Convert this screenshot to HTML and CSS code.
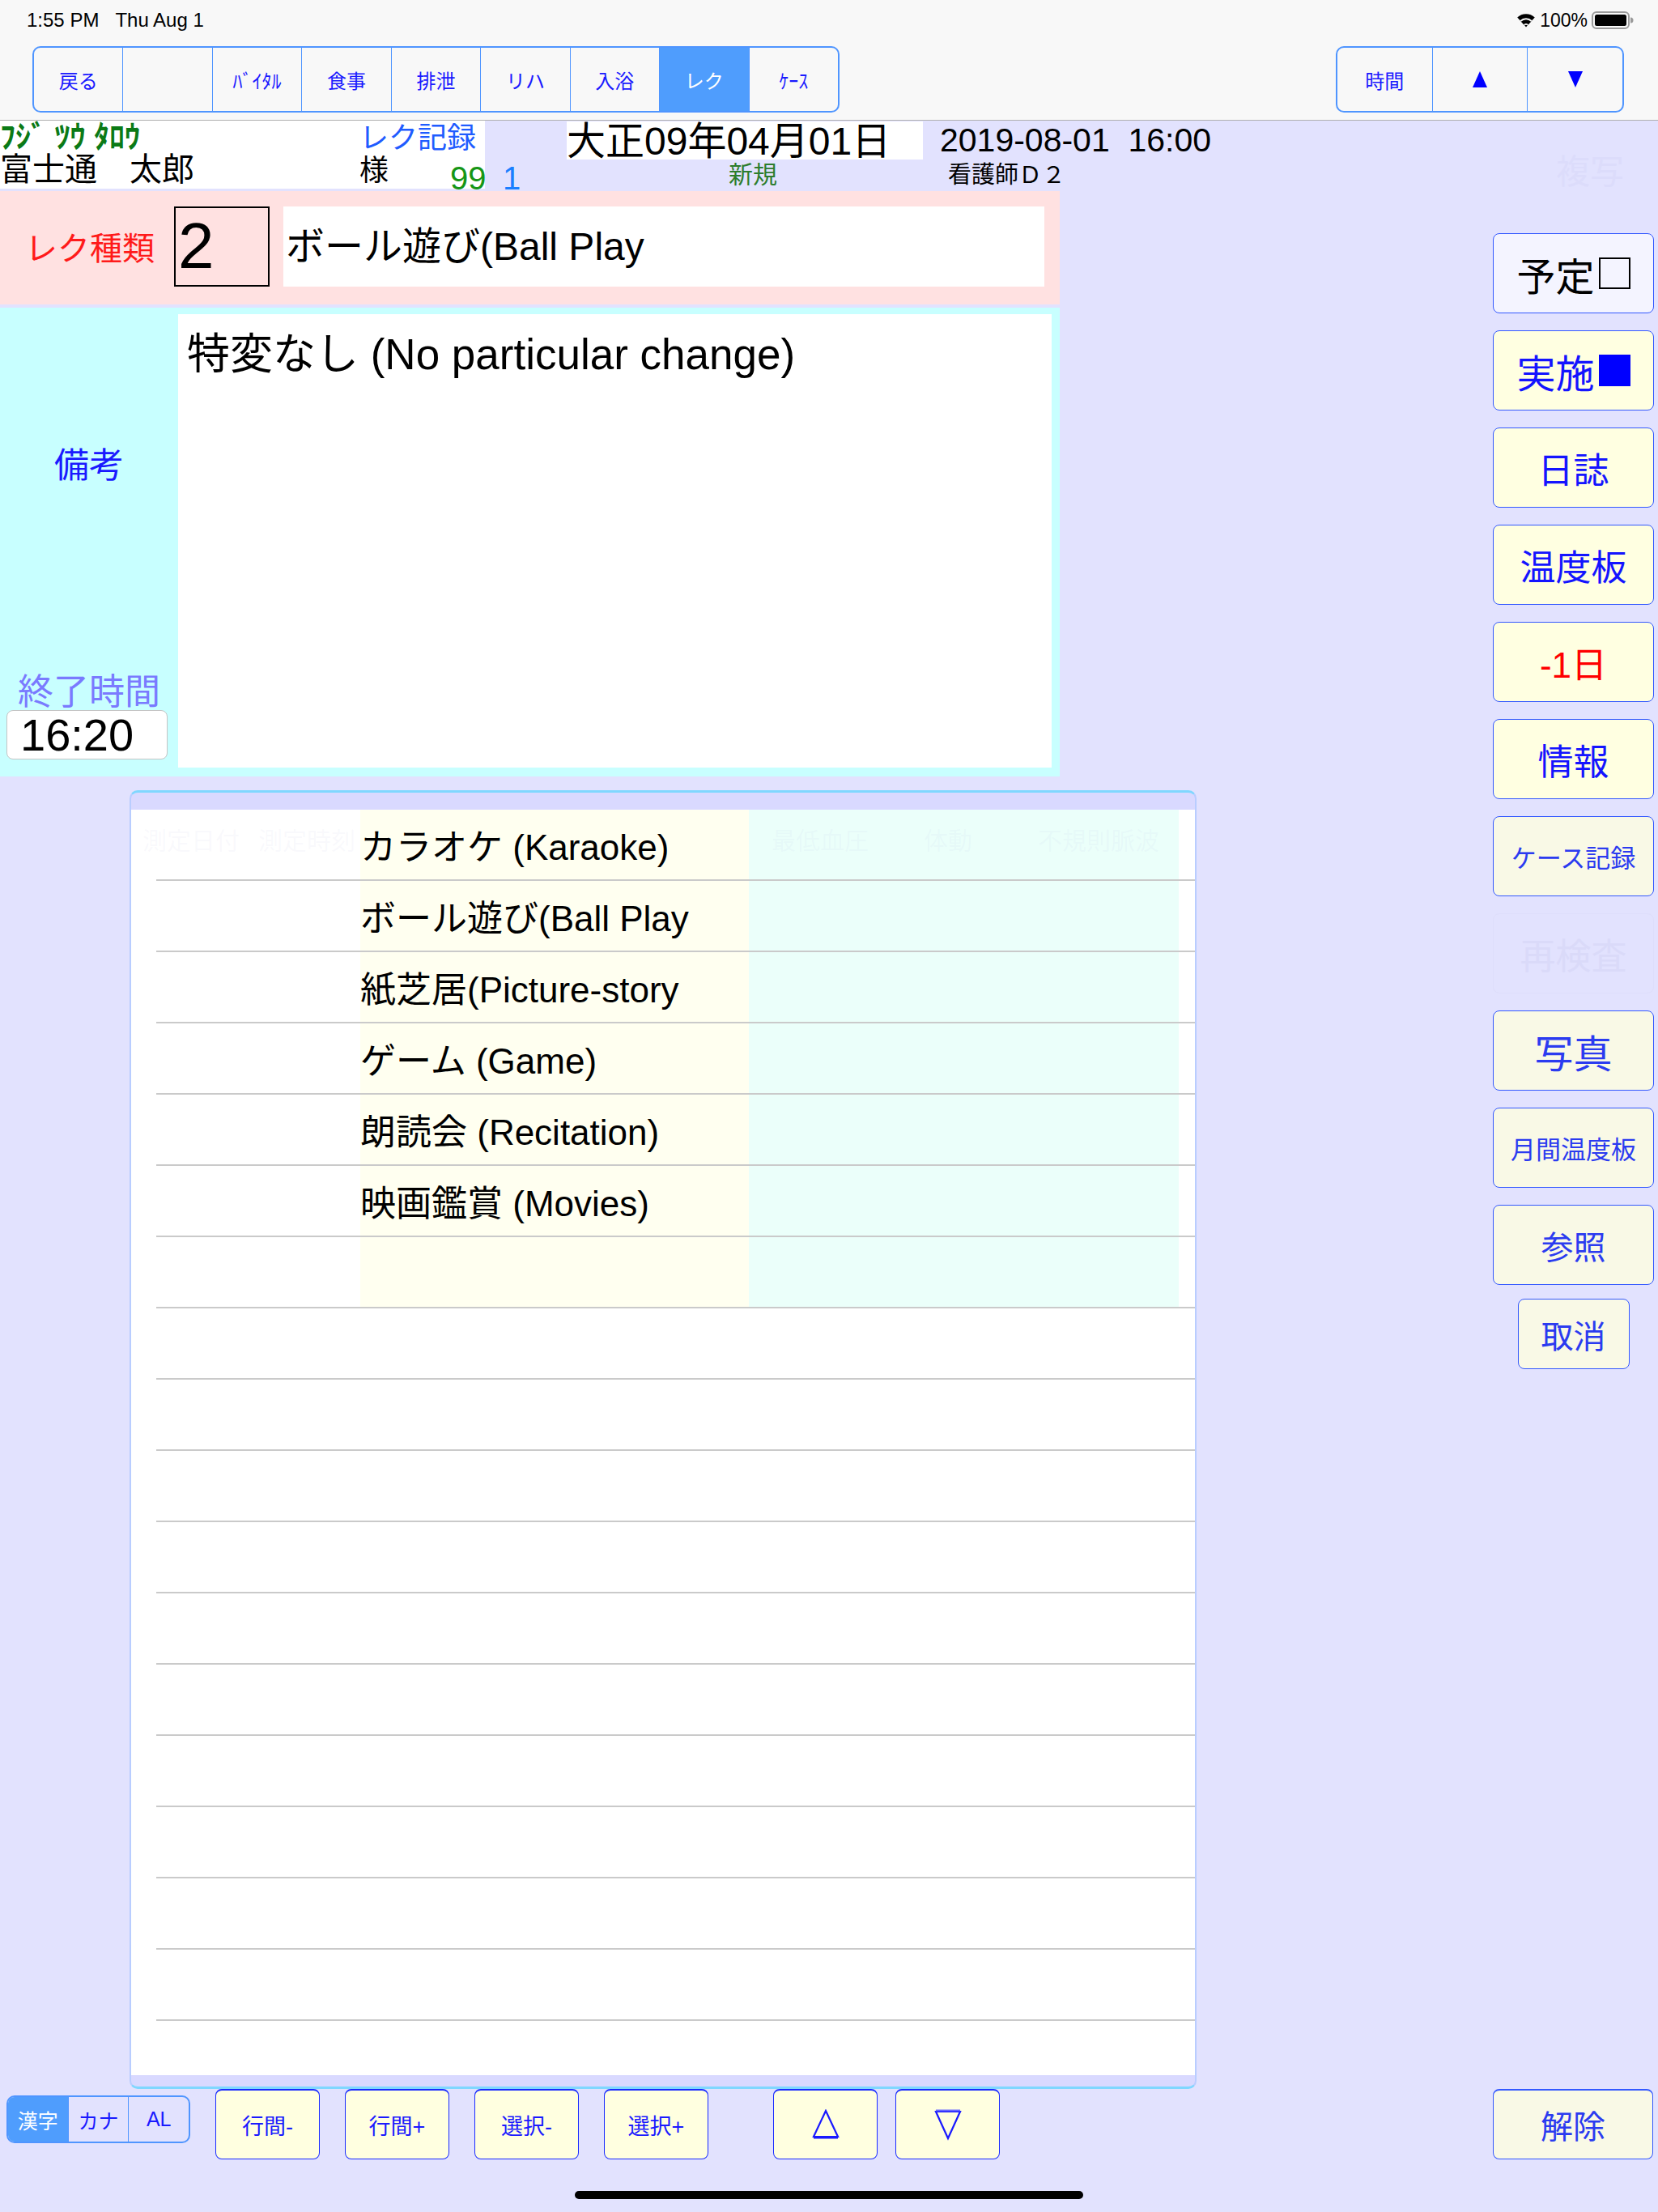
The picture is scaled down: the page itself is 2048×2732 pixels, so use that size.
FILE: index.html
```html
<!DOCTYPE html>
<html lang="ja">
<head>
<meta charset="utf-8">
<title>レク記録</title>
<link rel="stylesheet" href="styles.css">
</head>
<body>
<div class="screen">
  <header class="topbar">
    <div class="status">
      <span class="status-time">1:55 PM&nbsp;&nbsp;&nbsp;Thu Aug 1</span>
      <span class="status-right">
        <svg class="wifi" width="24" height="18" viewBox="0 0 24 18">
          <path d="M12 17.2 L1.2 5.6 A15.5 15.5 0 0 1 22.8 5.6 Z" fill="#000"/>
          <path d="M12 17.2 L4.6 9.3 A10.6 10.6 0 0 1 19.4 9.3 Z" fill="#f8f8f8"/>
          <path d="M12 17.2 L5.9 10.7 A8.6 8.6 0 0 1 18.1 10.7 Z" fill="#000"/>
          <path d="M12 17.2 L9.2 14.2 A4.2 4.2 0 0 1 14.8 14.2 Z" fill="#f8f8f8"/>
          <path d="M12 17.2 L10.3 15.4 A2.6 2.6 0 0 1 13.7 15.4 Z" fill="#000"/>
        </svg>
        <span class="pct">100%</span>
        <svg class="battery" width="52" height="22" viewBox="0 0 52 22">
          <rect x="1" y="1" width="45" height="20" rx="5" fill="none" stroke="#9a9a9a" stroke-width="2"/>
          <rect x="4" y="4" width="39" height="14" rx="2.5" fill="#000"/>
          <path d="M48 7.5 v7 a3.5 3.5 0 0 0 0 -7z" fill="#9a9a9a"/>
        </svg>
      </span>
    </div>
    <nav class="navrow">
      <div class="seg nav-left">
        <div class="seg-btn">戻る</div>
        <div class="seg-btn"></div>
        <div class="seg-btn">ﾊﾞｲﾀﾙ</div>
        <div class="seg-btn">食事</div>
        <div class="seg-btn">排泄</div>
        <div class="seg-btn">リハ</div>
        <div class="seg-btn">入浴</div>
        <div class="seg-btn active">レク</div>
        <div class="seg-btn">ｹｰｽ</div>
      </div>
      <div class="seg nav-right">
        <div class="seg-btn">時間</div>
        <div class="seg-btn"><svg width="20" height="22" viewBox="0 0 20 22"><polygon points="10,1 19,21 1,21" fill="#0000ff"/></svg></div>
        <div class="seg-btn"><svg width="20" height="22" viewBox="0 0 20 22"><polygon points="1,1 19,1 10,21" fill="#0000ff"/></svg></div>
      </div>
    </nav>
  </header>

  <div class="main">
    <div class="left">
      <div class="info">
        <div class="namebox">
          <div class="kana">ﾌｼﾞ ﾂｳ ﾀﾛｳ</div>
          <div class="rec">レク記録</div>
          <div class="fullname">富士通　太郎</div>
          <div class="sama">様</div>
          <div class="age">99</div>
        </div>
        <div class="num1">1</div>
        <div class="dates">
          <div class="wareki">大正09年04月01日</div>
          <div class="seireki">2019-08-01&nbsp;&nbsp;16:00</div>
          <div class="shinki">新規</div>
          <div class="nurse">看護師Ｄ２</div>
        </div>
      </div>

      <div class="kind">
        <div class="kind-label">レク種類</div>
        <div class="kind-code">2</div>
        <div class="kind-name">ボール遊び(Ball Play</div>
      </div>

      <div class="memo">
        <div class="memo-side">
          <div class="bikou">備考</div>
          <div class="endlabel">終了時間</div>
          <div class="endtime">16:20</div>
        </div>
        <div class="memo-text">特変なし (No particular change)</div>
      </div>

      <div class="tbl">
        <div class="tbl-head"></div>
        <div class="tbl-body">
          <div class="ghost-head">
            <span>測定日付</span><span>測定時刻</span><span>脈拍</span><span>最高血圧</span><span>最低血圧</span><span>体動</span><span>不規則脈波</span>
          </div>
          <div class="row"><div class="c1"></div><div class="c2">カラオケ (Karaoke)</div><div class="c3"></div><div class="c4"></div></div>
          <div class="row"><div class="c1"></div><div class="c2">ボール遊び(Ball Play</div><div class="c3"></div><div class="c4"></div></div>
          <div class="row"><div class="c1"></div><div class="c2">紙芝居(Picture-story</div><div class="c3"></div><div class="c4"></div></div>
          <div class="row"><div class="c1"></div><div class="c2">ゲーム (Game)</div><div class="c3"></div><div class="c4"></div></div>
          <div class="row"><div class="c1"></div><div class="c2">朗読会 (Recitation)</div><div class="c3"></div><div class="c4"></div></div>
          <div class="row"><div class="c1"></div><div class="c2">映画鑑賞 (Movies)</div><div class="c3"></div><div class="c4"></div></div>
          <div class="row"><div class="c1"></div><div class="c2"></div><div class="c3"></div><div class="c4"></div></div>
          <div class="row empty"></div>
          <div class="row empty"></div>
          <div class="row empty"></div>
          <div class="row empty"></div>
          <div class="row empty"></div>
          <div class="row empty"></div>
          <div class="row empty"></div>
          <div class="row empty"></div>
          <div class="row empty"></div>
          <div class="row empty"></div>
          <div class="row empty"></div>
        </div>
        <div class="tbl-foot"></div>
      </div>
    </div>

    <aside class="side">
      <div class="ghost-copy">複写</div>
      <div class="side-btns">
        <div class="sbtn yotei">予定<span class="box-empty"></span></div>
        <div class="sbtn big">実施<span class="box-full"></span></div>
        <div class="sbtn">日誌</div>
        <div class="sbtn">温度板</div>
        <div class="sbtn red">-1日</div>
        <div class="sbtn">情報</div>
        <div class="sbtn small alt">ケース記録</div>
        <div class="sbtn ghost">再検査</div>
        <div class="sbtn big alt">写真</div>
        <div class="sbtn small alt">月間温度板</div>
        <div class="sbtn mid alt">参照</div>
        <div class="sbtn mid alt cancel">取消</div>
      </div>
    </aside>
  </div>

  <footer class="bottom">
    <div class="tools">
      <div class="seg ime">
        <div class="seg-btn active">漢字</div>
        <div class="seg-btn">カナ</div>
        <div class="seg-btn">AL</div>
      </div>
      <div class="bbtn first">行間-</div>
      <div class="bbtn">行間+</div>
      <div class="bbtn">選択-</div>
      <div class="bbtn">選択+</div>
      <div class="bbtn up"><svg width="40" height="38" viewBox="0 0 40 38"><polygon points="20,2 35,34 5,34" fill="none" stroke="#1a1aff" stroke-width="2.2"/><line x1="5" y1="35.5" x2="35" y2="35.5" stroke="#1a1aff" stroke-width="2"/></svg></div>
      <div class="bbtn down"><svg width="40" height="40" viewBox="0 0 40 40"><polygon points="5,4 35,4 20,37" fill="none" stroke="#1a1aff" stroke-width="2.2"/><line x1="5" y1="2.5" x2="35" y2="2.5" stroke="#6a6aff" stroke-width="2"/></svg></div>
      <div class="bbtn release">解除</div>
    </div>
    <div class="home"></div>
  </footer>
</div>
</body>
</html>
```

FILE: styles.css
```css
* { box-sizing: border-box; margin: 0; padding: 0; }
html, body { width: 2048px; height: 2732px; }
body {
  background: #e2e2fe;
  font-family: "Liberation Sans", "Noto Sans CJK JP", sans-serif;
  color: #000;
  overflow: hidden;
}
.screen { width: 2048px; height: 2732px; display: flex; flex-direction: column; }

/* top bar */
.topbar { height: 149px; flex: none; background: #f8f8f8; border-bottom: 1px solid #b0b0b0; }
.status {
  height: 50px; display: flex; align-items: center; justify-content: space-between;
  padding: 0 30px 0 33px; font-size: 24px; color: #000;
}
.status-right { display: flex; align-items: center; gap: 5px; }
.pct { font-size: 23px; }
.navrow { height: 82px; margin-top: 7px; display: flex; justify-content: space-between; padding: 0 42px 0 40px; }
.seg { display: flex; border: 2px solid #4f95ff; border-radius: 10px; overflow: hidden; }
.seg-btn {
  flex: 1; display: flex; align-items: center; justify-content: center;
  color: #1a1aff; font-size: 24px; border-left: 1.5px solid #4f95ff;
}
.seg-btn:first-child { border-left: none; }
.seg-btn.active { background: #4f9dfd; color: #fff; }
.nav-left { width: 997px; }
.nav-right { width: 356px; }

/* main */
.main { height: 2431px; flex: none; display: flex; }
.left { width: 1480px; flex: none; display: flex; flex-direction: column; }

.info { height: 87px; flex: none; display: flex; align-items: flex-start; }
.info > * { flex: none; }
.namebox {
  width: 599px; height: 84px; background: #fff;
  display: grid; grid-template-columns: 444px 112px 43px; grid-template-rows: 40px 44px;
}
.kana { grid-column: 1; grid-row: 1; font-size: 38px; font-weight: bold; line-height: 40px; color: #0b7a16; white-space: nowrap; }
.rec { grid-column: 2 / span 2; grid-row: 1; font-size: 36px; line-height: 40px; color: #1f5cff; white-space: nowrap; padding-top: 2px; }
.fullname { grid-column: 1; grid-row: 2; font-size: 40px; line-height: 40px; white-space: nowrap; }
.sama { grid-column: 2; grid-row: 2; font-size: 36px; line-height: 40px; margin-top: 2px; }
.age { grid-column: 3; grid-row: 2; font-size: 40px; line-height: 40px; margin-top: 11px; color: #169616; white-space: nowrap; }
.num1 { width: 101px; padding-left: 22px; font-size: 40px; line-height: 40px; margin-top: 51px; color: #1a7fff; }

.dates {
  margin-top: 1px; display: grid; grid-template-columns: 440px auto; grid-template-rows: 48px 38px; column-gap: 21px;
}
.wareki { height: 47px; background: #fff; font-size: 48px; line-height: 50px; white-space: nowrap; }
.seireki { font-size: 41px; line-height: 46px; white-space: nowrap; }
.shinki { text-align: center; font-size: 30px; line-height: 36px; color: #2d7d2d; padding-left: 20px; }
.nurse { font-size: 29px; line-height: 36px; padding-left: 10px; white-space: nowrap; }

/* kind row */
.kind {
  height: 140px; width: 1309px; flex: none; background: #ffe1e1;
  display: flex; align-items: center; padding-left: 31px; padding-bottom: 4px;
}
.kind > * { flex: none; }
.kind-label { width: 184px; font-size: 40px; color: #ff1a1a; white-space: nowrap; }
.kind-code { width: 118px; height: 99px; border: 2px solid #000; font-size: 80px; line-height: 93px; padding-left: 3px; }
.kind-name { margin-left: 17px; width: 940px; height: 99px; background: #fff; font-size: 48px; line-height: 99px; padding-left: 3px; white-space: nowrap; }

/* memo */
.memo {
  height: 579px; width: 1309px; flex: none; margin-top: 4px; background: #c8ffff;
  display: flex; padding: 8px 10px 11px 0;
}
.memo-side { width: 220px; flex: none; display: flex; flex-direction: column; align-items: center; padding-top: 165px; padding-bottom: 10px; }
.bikou { font-size: 43px; line-height: 44px; color: #1a1aff; }
.endlabel { margin-top: auto; font-size: 44px; line-height: 44px; color: #7a7aff; white-space: nowrap; }
.endtime {
  align-self: flex-start; margin-left: 8px; width: 199px; height: 61px; background: #fff;
  border: 1px solid #c4c4c4; border-radius: 8px; font-size: 56px; line-height: 59px; padding-left: 16px;
}
.memo-text { flex: 1; background: #fff; font-size: 53px; line-height: 58px; padding: 21px 0 0 11px; white-space: nowrap; }

/* table */
.tbl {
  margin: 17px 0 0 160px; width: 1318px; height: 1604px; flex: none;
  border: 2px solid #b9cdff; border-top: 3px solid #7fd7ff; border-bottom: 3px solid #7fd7ff;
  border-radius: 10px; background: #d9d9ff; display: flex; flex-direction: column; overflow: hidden;
}
.tbl-head { height: 21px; flex: none; }
.tbl-body { flex: 1; background: #fff; position: relative; overflow: hidden; }
.tbl-foot { height: 14px; flex: none; }
.row {
  display: grid; grid-template-columns: 252px 480px 531px 1fr; height: 88px;
  margin-left: 31px; border-bottom: 2px solid #cacaca;
}
.row .c2 { background: #fffff0; font-size: 44px; display: flex; align-items: center; white-space: nowrap; position: relative; }
.row .c3 { background: #ebfffa; }
.ghost-head {
  position: absolute; top: 22px; left: 14px; display: flex;
  font-size: 30px; line-height: 34px; color: rgba(170, 170, 220, 0.07); white-space: nowrap;
}
.ghost-head span:nth-child(1) { width: 143px; }
.ghost-head span:nth-child(2) { width: 263px; }
.ghost-head span:nth-child(3) { width: 158px; }
.ghost-head span:nth-child(4) { width: 213px; }
.ghost-head span:nth-child(5) { width: 188px; }
.ghost-head span:nth-child(6) { width: 141px; }

/* side column */
.side { width: 199px; flex: none; margin-left: auto; margin-right: 5px; display: flex; flex-direction: column; }
.ghost-copy { height: 40px; margin-top: 44px; margin-left: 78px; font-size: 42px; line-height: 40px; color: #dcdcfb; white-space: nowrap; }
.side-btns { margin-top: 55px; display: flex; flex-direction: column; gap: 21px; }
.sbtn {
  height: 99px; flex: none; border: 1.5px solid #3358ff; border-radius: 8px; background: #ffffe1;
  display: flex; align-items: center; justify-content: center;
  font-size: 44px; color: #1414ff; white-space: nowrap;
}
.sbtn.yotei { background: #f4f4ff; color: #000; font-size: 48px; }
.sbtn.big { font-size: 48px; }
.box-empty { display: inline-block; width: 39px; height: 39px; border: 2.5px solid #000; margin-left: 5px; }
.box-full { display: inline-block; width: 39px; height: 39px; background: #0000ff; margin-left: 5px; }
.sbtn.red { color: #ff0000; }
.sbtn.alt { background: #f9f9e6; color: #2b3bf0; }
.sbtn.small { font-size: 31px; }
.sbtn.mid { font-size: 40px; }
.sbtn.ghost { background: transparent; border-color: #dedefb; color: #dadaf9; }
.sbtn.cancel { width: 138px; height: 87px; align-self: center; margin-top: -4px; }

/* bottom */
.bottom { height: 152px; flex: none; display: flex; flex-direction: column; }
.tools { height: 87px; display: flex; align-items: flex-start; padding-left: 8px; padding-right: 6px; }
.tools > * { flex: none; }
.ime { width: 227px; height: 59px; margin-top: 8px; }
.ime .seg-btn { font-size: 25px; }
.bbtn {
  width: 129px; height: 87px; margin-left: 31px; background: #ffffe0;
  border: 1.5px solid #1a2cff; border-top-width: 2px; border-radius: 8px;
  display: flex; align-items: center; justify-content: center;
  font-size: 27px; color: #1a1aff; white-space: nowrap;
}
.bbtn.up { margin-left: 80px; }
.bbtn.down { margin-left: 22px; }
.bbtn.release {
  margin-left: auto; width: 198px; background: #f9f9e6; border-color: #3358ff;
  font-size: 40px; color: #2b3bf0;
}
.home { width: 628px; height: 10px; margin: 39px auto 0; background: #000; border-radius: 5px; }
```
